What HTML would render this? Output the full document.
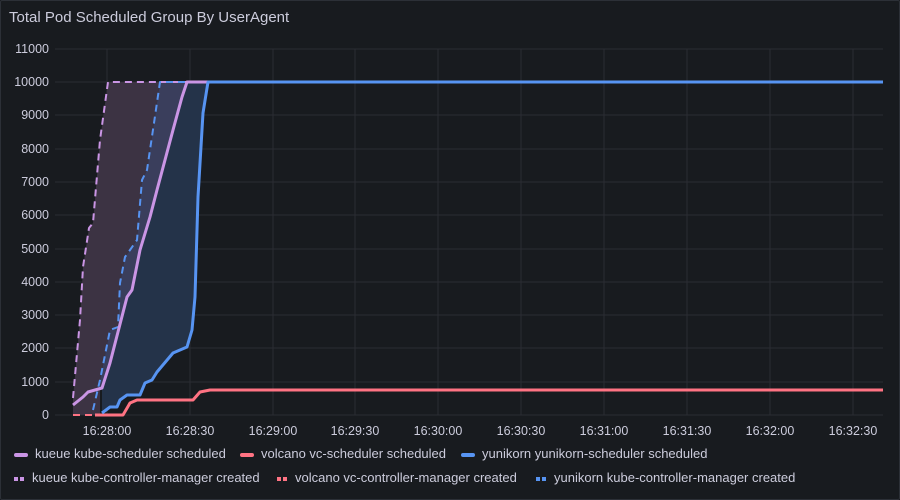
<!DOCTYPE html><html><head><style>
body{margin:0;background:#111217;}
.p{position:absolute;left:0;top:0;width:898px;height:498px;background:#181b1f;border:1px solid #2c3037;border-radius:2px;font-family:"Liberation Sans",sans-serif;color:#ccccdc}
.t{position:absolute;left:8px;top:8px;font-size:15px;}
svg text{font-family:"Liberation Sans",sans-serif;font-size:12.5px;fill:#ccccdc}
.lg{position:absolute;font-size:13px;color:#ccccdc;white-space:nowrap}
.lg i{display:inline-block;width:14px;height:4px;border-radius:2px;margin-right:7px;vertical-align:middle}
.lg b{display:inline-block;width:4px;height:4px;margin-right:2px;vertical-align:middle}
</style></head><body><div class="p">
<div class="t">Total Pod Scheduled Group By UserAgent</div>
<svg width="900" height="500" style="position:absolute;left:-1px;top:-1px">
<g stroke="#2a2d33" stroke-width="1">
<line x1="55" x2="883" y1="49" y2="49"/><line x1="55" x2="883" y1="82" y2="82"/><line x1="55" x2="883" y1="115" y2="115"/><line x1="55" x2="883" y1="149" y2="149"/><line x1="55" x2="883" y1="182" y2="182"/><line x1="55" x2="883" y1="215" y2="215"/><line x1="55" x2="883" y1="249" y2="249"/><line x1="55" x2="883" y1="282" y2="282"/><line x1="55" x2="883" y1="315" y2="315"/><line x1="55" x2="883" y1="348" y2="348"/><line x1="55" x2="883" y1="382" y2="382"/><line x1="55" x2="883" y1="415" y2="415"/>
<line x1="107" x2="107" y1="49" y2="415"/><line x1="190" x2="190" y1="49" y2="415"/><line x1="273" x2="273" y1="49" y2="415"/><line x1="355" x2="355" y1="49" y2="415"/><line x1="438" x2="438" y1="49" y2="415"/><line x1="521" x2="521" y1="49" y2="415"/><line x1="604" x2="604" y1="49" y2="415"/><line x1="687" x2="687" y1="49" y2="415"/><line x1="770" x2="770" y1="49" y2="415"/><line x1="853" x2="853" y1="49" y2="415"/>
</g>
<g text-anchor="end"><text x="49" y="53">11000</text><text x="49" y="86">10000</text><text x="49" y="119">9000</text><text x="49" y="153">8000</text><text x="49" y="186">7000</text><text x="49" y="219">6000</text><text x="49" y="253">5000</text><text x="49" y="286">4000</text><text x="49" y="319">3000</text><text x="49" y="352">2000</text><text x="49" y="386">1000</text><text x="49" y="419">0</text></g>
<g text-anchor="middle"><text x="107" y="435">16:28:00</text><text x="190" y="435">16:28:30</text><text x="273" y="435">16:29:00</text><text x="355" y="435">16:29:30</text><text x="438" y="435">16:30:00</text><text x="521" y="435">16:30:30</text><text x="604" y="435">16:31:00</text><text x="687" y="435">16:31:30</text><text x="770" y="435">16:32:00</text><text x="853" y="435">16:32:30</text></g>
<polygon fill="#3c3343" points="73,398 80,320 83,267 89,228 93,223 100,140 108,82 160,82 154,123 147,170 142,180 137,240 130,250 125,257 120,283 118,327 110,330 100,380 100,415 73,415"/>
<polygon fill="#3a3e5c" points="160,82 187,82 182,97 173,130 165,160 157,190 150,217 140,250 132,290 127,297 110,363 102,388 100,390 100,380 110,330 118,327 120,283 125,257 130,250 137,240 142,180 147,170 154,123"/>
<polygon fill="#243349" points="187,82 208,82 203,113 198,197 195,297 192,330 187,347 173,353 157,372 152,380 145,383 140,395 127,395 120,400 117,407 110,407 102,413 102,388 110,363 127,297 132,290 140,250 150,217 157,190 165,160 173,130 182,97"/>
<g fill="none" stroke-width="3" stroke-linejoin="round">
<polyline stroke="#ca95e5" stroke-dasharray="7,5" stroke-width="2" points="73,398 80,320 83,267 89,228 93,223 100,140 108,82 883,82"/>
<polyline stroke="#5794f2" stroke-dasharray="7,5" stroke-width="2" points="93,410 100,380 110,330 118,327 120,283 125,257 130,250 137,240 142,180 147,170 154,123 160,82 883,82"/>
<polyline stroke="#ff7383" stroke-dasharray="7,5" stroke-width="2" points="73,415 95,415 123,415 130,403 137,400 193,400 200,392 210,390 883,390"/>
<polyline stroke="#ff7383" points="95,415 123,415 130,403 137,400 193,400 200,392 210,390 883,390"/>
<polyline stroke="#ca95e5" points="73,405 83,397 88,392 95,390 102,388 110,363 127,297 132,290 140,250 150,217 157,190 165,160 173,130 182,97 187,82 208,82"/>
<polyline stroke="#5794f2" points="102,413 110,407 117,407 120,400 127,395 140,395 145,383 152,380 157,372 173,353 187,347 192,330 195,297 198,197 203,113 208,82 883,82"/>
</g>
</svg>
<div class="lg" style="top:445px;left:13px"><i style="background:#ca95e5"></i>kueue kube-scheduler scheduled</div>
<div class="lg" style="top:445px;left:239px"><i style="background:#ff7383"></i>volcano vc-scheduler scheduled</div>
<div class="lg" style="top:445px;left:460px"><i style="background:#5794f2"></i>yunikorn yunikorn-scheduler scheduled</div>
<div class="lg" style="top:469px;left:13px"><b style="background:#ca95e5"></b><b style="background:#ca95e5;margin-right:8px"></b>kueue kube-controller-manager created</div>
<div class="lg" style="top:469px;left:276px"><b style="background:#ff7383"></b><b style="background:#ff7383;margin-right:8px"></b>volcano vc-controller-manager created</div>
<div class="lg" style="top:469px;left:535px"><b style="background:#5794f2"></b><b style="background:#5794f2;margin-right:8px"></b>yunikorn kube-controller-manager created</div>
</div></body></html>
